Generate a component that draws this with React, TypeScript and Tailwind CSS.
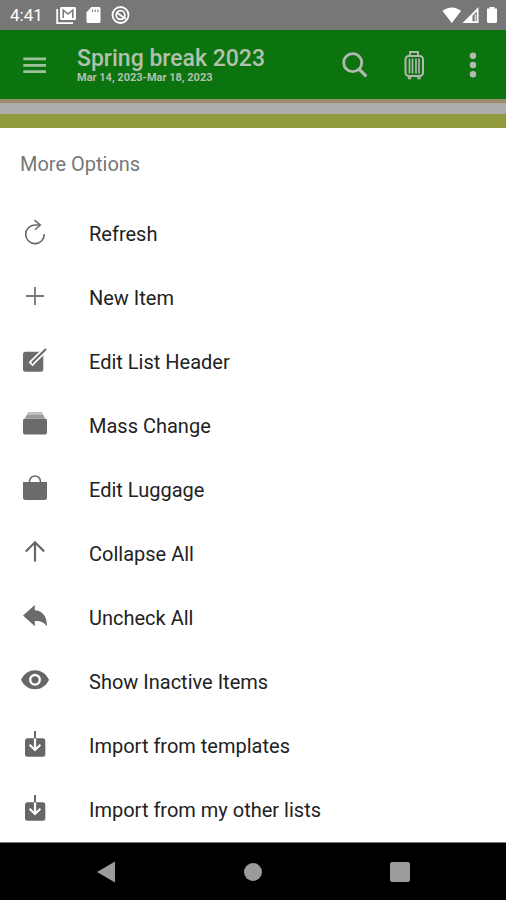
import React from 'react';

interface IconProps {
    children: React.ReactNode;
}

const Icon: React.FC<IconProps> = ({ children }) => (
    <svg viewBox="0 0 30 30" className="size-[30px] shrink-0" fill="none" aria-hidden="true">
        {children}
    </svg>
);

const ImportIcon = () => (
    <Icon>
        <rect x="5" y="7.3" width="20.3" height="18.5" rx="2.5" fill="#666" />
        <path d="M15 0v7.5" stroke="#666" strokeWidth="2" />
        <path d="M15 7.5v11M9.6 13.8l5.4 5.2 5.4-5.2" stroke="#fff" strokeWidth="2.2" />
    </Icon>
);

interface MenuOption {
    label: string;
    icon: React.ReactNode;
}

const options: MenuOption[] = [
    {
        label: 'Refresh',
        icon: (
            <Icon>
                <path d="M20 6H15A9.3 9.3 0 1 0 24.3 15" stroke="#666" strokeWidth="1.6" />
                <path d="M14.5 1.2l5.8 4.8-5.4 4.8" stroke="#666" strokeWidth="1.5" />
            </Icon>
        ),
    },
    {
        label: 'New Item',
        icon: (
            <Icon>
                <path d="M15 4v18M6 13h18" stroke="#777" strokeWidth="1.8" />
            </Icon>
        ),
    },
    {
        label: 'Edit List Header',
        icon: (
            <Icon>
                <rect x="3" y="4.8" width="20.3" height="20" rx="2.5" fill="#6b6b6b" />
                <path d="M26.5 1.5L13.5 14.2l-2.8 3.2" stroke="#fff" strokeWidth="5.4" />
                <path d="M26 2L13.5 14.2l-1.6 2.2" stroke="#666" strokeWidth="2" />
            </Icon>
        ),
    },
    {
        label: 'Mass Change',
        icon: (
            <Icon>
                <path d="M8 1h14l1 2.6H7z" fill="#c0c0c0" />
                <path d="M7 3.6h16l2 3.6H5z" fill="#9a9a9a" />
                <rect x="3" y="7.4" width="24" height="16.2" rx="2" fill="#6b6b6b" />
            </Icon>
        ),
    },
    {
        label: 'Edit Luggage',
        icon: (
            <Icon>
                <path d="M9.5 8V6.5a5.5 5.5 0 0 1 11 0V8" stroke="#6b6b6b" strokeWidth="1.6" />
                <path d="M3 7h24v15.5a2.5 2.5 0 0 1-2.5 2.5h-19A2.5 2.5 0 0 1 3 22.5z" fill="#6b6b6b" />
            </Icon>
        ),
    },
    {
        label: 'Collapse All',
        icon: (
            <Icon>
                <path d="M15 22.5V3.5M5.8 12.5L15 3.3l9.2 9.2" stroke="#666" strokeWidth="2.2" />
            </Icon>
        ),
    },
    {
        label: 'Uncheck All',
        icon: (
            <Icon>
                <path d="M3 12.5L14.8 2v5.2C21.5 7.5 27 12 27 23.3c-3-4.3-6.5-5.500-12.200-5.300v5.300z" fill="#6b6b6b" />
            </Icon>
        ),
    },
    {
        label: 'Show Inactive Items',
        icon: (
            <Icon>
                <path d="M1 12.8C4 6.500 9 3.200 15 3.200s11 3.300 14 9.600c-3 6.300-8 9.500-14 9.500S4 19.100 1 12.800z" fill="#666" />
                <circle cx="15" cy="12.8" r="4.8" stroke="#fff" strokeWidth="2.4" />
            </Icon>
        ),
    },
    { label: 'Import from templates', icon: <ImportIcon /> },
    { label: 'Import from my other lists', icon: <ImportIcon /> },
];

const StatusBar = () => (
    <div className="flex h-[30px] items-center justify-between bg-[#777] pl-2.5 pr-2 text-white">
        <div className="flex items-center">
            <span className="w-[46px] text-[17px] leading-5">4:41</span>
            <svg viewBox="0 0 76 20" className="h-5 w-[76px]" fill="none" aria-hidden="true">
                <path d="M1.2 4v14.2H17" stroke="#fff" strokeWidth="1.8" />
                <rect x="4" y="2" width="16" height="13" rx="1.5" fill="#fff" />
                <path d="M7.2 13V5l4.8 4 4.8-4v8" stroke="#777" strokeWidth="1.5" />
                <path d="M35.5 2H43a1.5 1.5 0 0 1 1.5 1.5v13A1.5 1.5 0 0 1 43 18H32a1.5 1.5 0 0 1-1.5-1.500V7.200z" fill="#fff" />
                <path d="M36.5 4.500v2.500M39.200 4.500v2.500M41.900 4.500v2.500" stroke="#777" strokeWidth="1.1" />
                <circle cx="64.5" cy="10" r="8" stroke="#fff" strokeWidth="1.8" />
                <circle cx="64.5" cy="10" r="4.3" stroke="#fff" strokeWidth="1.7" />
                <path d="M60.5 7.500l9.500 6.500" stroke="#fff" strokeWidth="2" />
            </svg>
        </div>
        <svg viewBox="0 0 56 18" className="h-[18px] w-14" fill="none" aria-hidden="true">
            <path d="M.5 5C5.500.2 14 .2 19 5L9.800 17z" fill="#fff" />
            <path d="M36.500 1v16h-16z" fill="#fff" />
            <path d="M34.700 5.500v9.700h-4.200v-5.500z" fill="#777" />
            <path d="M33.200 8.500v6.500" stroke="#fff" strokeWidth="1" />
            <path d="M47.500 1h5v1.500h2.500V15.500a1.500 1.500 0 0 1-1.500 1.500h-7a1.500 1.500 0 0 1-1.500-1.500V2.500h2.500z" fill="#fff" />
        </svg>
    </div>
);

const AppBar = () => (
    <header className="flex h-[69px] items-center bg-[#0c740f] pl-5 pr-[18px]">
        <button type="button" aria-label="Open menu">
            <Icon>
                <path d="M3.3 8.8h22.7M3.3 15.3h22.7M3.3 21.7h22.7" stroke="#9dc29b" strokeWidth="2.8" />
            </Icon>
        </button>
        <div className="ml-[27px] flex-1 whitespace-nowrap text-[#b2c1ae]">
            <h1 className="text-[23px] leading-[26px] font-medium">Spring break 2023</h1>
            <p className="text-[11px] leading-3 font-bold">Mar 14, 2023-Mar 18, 2023</p>
        </div>
        <div className="flex gap-[29px]">
            <button type="button" aria-label="Search">
                <Icon>
                    <circle cx="12.7" cy="12.7" r="9" stroke="#b5b8b2" strokeWidth="2.8" />
                    <path d="M18.8 18.8l7.5 7.5" stroke="#b5b8b2" strokeWidth="3.2" />
                </Icon>
            </button>
            <button type="button" aria-label="Luggage">
                <Icon>
                    <path d="M11 6V2h8v4" stroke="#b5b8b2" strokeWidth="1.8" />
                    <rect x="6.5" y="6" width="17.5" height="20" rx="3.5" stroke="#b5b8b2" strokeWidth="2" />
                    <path d="M10.500 8.500v15M13.500 8.500v15M17 8.500v15M20 8.500v15" stroke="#b5b8b2" strokeWidth="1.6" />
                    <path d="M9.500 26v2.500h2V26M19 26v2.500h2V26" stroke="#b5b8b2" strokeWidth="1.3" />
                </Icon>
            </button>
            <button type="button" aria-label="More options">
                <Icon>
                    <g fill="#b5b8b2">
                        <circle cx="15" cy="5.8" r="3.2" />
                        <circle cx="15" cy="15" r="3.2" />
                        <circle cx="15" cy="24.2" r="3.2" />
                    </g>
                </Icon>
            </button>
        </div>
    </header>
);

const NavigationBar = () => (
    <nav className="flex h-[58px] items-center justify-between border-t border-[#777] bg-black px-[82px]">
        <button type="button" aria-label="Back" className="flex w-12 justify-center">
            <svg viewBox="0 0 20 22" className="h-[22px] w-5" aria-hidden="true">
                <path d="M1 11L19 .5v21z" fill="#9b9b9b" />
            </svg>
        </button>
        <button type="button" aria-label="Home" className="flex w-12 justify-center">
            <span className="size-[18px] rounded-full bg-[#9b9b9b]" />
        </button>
        <button type="button" aria-label="Recent apps" className="flex w-12 justify-center">
            <span className="size-5 rounded-xs bg-[#9b9b9b]" />
        </button>
    </nav>
);

const App: React.FC = () => {
    return (
        <div className="flex min-h-screen flex-col bg-white font-[Roboto,sans-serif]">
            <StatusBar />
            <AppBar />
            <div className="h-1 bg-[#9c8b68]" />
            <div className="h-[11px] bg-[#aeacae]" />
            <div className="h-3.5 bg-[#919b3d]" />

            <main className="flex-1">
                <h2 className="px-5 pt-6 pb-[26px] text-xl leading-6 text-[#777]">More Options</h2>
                <ul>
                    {options.map((option) => (
                        <li key={option.label}>
                            <button type="button" className="flex h-16 w-full items-center gap-[39px] px-5 text-left">
                                {option.icon}
                                <span className="text-xl leading-6 text-[#222]">{option.label}</span>
                            </button>
                        </li>
                    ))}
                </ul>
            </main>

            <NavigationBar />
        </div>
    );
};

export default App;
